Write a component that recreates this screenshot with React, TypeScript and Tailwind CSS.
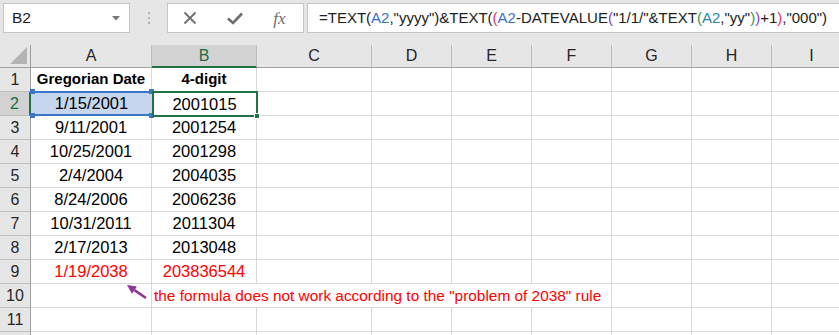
const COLS = [
  { key: "A", w: "w-[121px]" },
  { key: "B", w: "w-[105px]" },
  { key: "C", w: "w-[115px]" },
  { key: "D", w: "w-[80px]" },
  { key: "E", w: "w-[80px]" },
  { key: "F", w: "w-[80px]" },
  { key: "G", w: "w-[80px]" },
  { key: "H", w: "w-[80px]" },
  { key: "I", w: "w-[80px]" },
];

const DATA = [
  ["1/15/2001", "2001015"],
  ["9/11/2001", "2001254"],
  ["10/25/2001", "2001298"],
  ["2/4/2004", "2004035"],
  ["8/24/2006", "2006236"],
  ["10/31/2011", "2011304"],
  ["2/17/2013", "2013048"],
];

const RowHeader = ({ n, active }: { n?: number; active?: boolean }) => (
  <div
    className={
      active
        ? "w-[31px] shrink-0 h-full flex items-center justify-center text-[16px] bg-[#d2d2d2] text-[#1e6b41] border-r-2 border-r-[#217346] border-b border-b-[#bdbdbd]"
        : "w-[31px] shrink-0 h-full flex items-center justify-center text-[16px] bg-[#e6e6e6] text-[#262626] border-r border-r-[#9e9e9e] border-b border-b-[#bdbdbd]"
    }
  >
    {n}
  </div>
);

const Cell = ({ w, children, className = "" }: { w: string; children?: React.ReactNode; className?: string }) => (
  <div className={`${w} shrink-0 h-full flex items-center justify-center border-r border-b border-[#d9d9d9] bg-white ${className}`}>
    {children}
  </div>
);

const FormulaBar = () => (
  <div className="h-[45px] bg-[#e6e6e6] flex items-start pt-[3px] pl-[3px]">
    {/* name box */}
    <div className="w-[127px] h-[30px] bg-white border border-[#c6c6c6] flex items-center justify-between pl-[8px] pr-[9px] text-[15.5px] text-[#222]">
      <span>B2</span>
      <svg width="8" height="5" viewBox="0 0 8 5">
        <path d="M0 0 L8 0 L4 4.5 Z" fill="#777" />
      </svg>
    </div>
    <div className="w-[37px] h-[30px] flex flex-col items-center justify-center gap-[3px]">
      <div className="w-[2px] h-[2px] bg-[#b3b3b3]" />
      <div className="w-[2px] h-[2px] bg-[#b3b3b3]" />
      <div className="w-[2px] h-[2px] bg-[#b3b3b3]" />
    </div>
    {/* buttons */}
    <div className="w-[137px] h-[30px] bg-white border border-[#c6c6c6] flex items-center">
      <div className="w-[46px] flex justify-center">
        <svg width="14" height="14" viewBox="0 0 14 14">
          <path d="M1.5 1.5 L12.5 12.5 M12.5 1.5 L1.5 12.5" stroke="#6e6e6e" strokeWidth="1.8" />
        </svg>
      </div>
      <div className="w-[46px] flex justify-center">
        <svg width="16" height="13" viewBox="0 0 16 13">
          <path d="M1 6.5 L6 11 L15 1.5" stroke="#6e6e6e" strokeWidth="2.6" fill="none" />
        </svg>
      </div>
      <div className="w-[46px] flex justify-center pr-[2px] text-[17px] italic text-[#6e6e6e] font-['Liberation_Serif',serif] leading-none">
        fx
      </div>
    </div>
    {/* formula */}
    <div className="ml-[3px] flex-1 h-[30px] bg-white border border-r-0 border-[#c6c6c6] flex items-center pl-[11px] text-[15px] text-[#222] whitespace-nowrap overflow-hidden">
      <span>=TEXT(</span>
      <span className="text-[#3b6fc9]">A2</span>
      <span>,"yyyy")&amp;TEXT(</span>
      <span className="text-[#e0306a]">(</span>
      <span className="text-[#3b6fc9]">A2</span>
      <span>-DATEVALUE</span>
      <span className="text-[#8a3fc4]">(</span>
      <span>"1/1/"&amp;TEXT</span>
      <span className="text-[#2a9a56]">(</span>
      <span className="text-[#2f86a8]">A2</span>
      <span>,"yy"</span>
      <span className="text-[#2a9a56]">)</span>
      <span className="text-[#8a3fc4]">)</span>
      <span>+1</span>
      <span className="text-[#e0306a]">)</span>
      <span>,"000")</span>
    </div>
  </div>
);

const ColumnHeaders = () => (
  <div className="h-[23px] flex bg-[#e6e6e6] text-[16px]">
    <div className="w-[31px] shrink-0 h-full border-r border-b border-[#9e9e9e] flex items-end justify-end pr-[3px] pb-[3px]">
      <svg width="17" height="17" viewBox="0 0 17 17">
        <path d="M17 0 L17 17 L0 17 Z" fill="#b4b4b4" />
      </svg>
    </div>
    {COLS.map((c) =>
      c.key === "B" ? (
        <div
          key={c.key}
          className={`${c.w} shrink-0 h-full flex items-center justify-center bg-[#d2d2d2] text-[#1e6b41] border-r border-r-[#bdbdbd] border-b-2 border-b-[#217346]`}
        >
          {c.key}
        </div>
      ) : (
        <div
          key={c.key}
          className={`${c.w} shrink-0 h-full flex items-center justify-center text-[#262626] border-r border-r-[#bdbdbd] border-b border-b-[#9e9e9e]`}
        >
          {c.key}
        </div>
      )
    )}
  </div>
);

const Corner = ({ className }: { className: string }) => (
  <div className={`absolute w-[5px] h-[5px] ${className}`} />
);

export default function App() {
  return (
    <div className="relative w-[839px] h-[335px] overflow-hidden bg-white font-['Liberation_Sans',Arial,sans-serif]">
      <FormulaBar />
      <ColumnHeaders />

      {/* row 1 */}
      <div className="h-[24px] flex text-[15px]">
        <RowHeader n={1} />
        <Cell w={COLS[0].w} className="font-bold">Gregorian Date</Cell>
        <Cell w={COLS[1].w} className="font-bold">4-digit</Cell>
        {COLS.slice(2).map((c) => (
          <Cell key={c.key} w={c.w} />
        ))}
      </div>

      {DATA.map((r, i) => (
        <div key={i} className="h-[24px] flex text-[16.5px] text-black">
          <RowHeader n={i + 2} active={i === 0} />
          {i === 0 ? (
            <>
              <div className={`${COLS[0].w} shrink-0 h-full relative flex items-center justify-center bg-[#c5d6ee] border-b border-[#d9d9d9]`}>
                <div className="absolute left-0 right-0 top-[-1px] h-[2px] bg-[#3a76c9]" />
                <div className="absolute left-0 right-0 bottom-[-1px] h-[2px] bg-[#3a76c9]" />
                <Corner className="left-[-1px] top-[-3px] bg-[#3a76c9]" />
                <Corner className="left-[-1px] bottom-[-3px] bg-[#3a76c9]" />
                <Corner className="right-[-2px] top-[-3px] bg-[#3a76c9]" />
                <Corner className="right-[-2px] bottom-[-3px] bg-[#3a76c9]" />
                {r[0]}
              </div>
              <div className={`${COLS[1].w} shrink-0 h-full relative flex items-center justify-center bg-white`}>
                <div className="absolute left-0 right-[-1px] top-[-1px] bottom-[-1px] border-2 border-[#217346]" />
                <div className="absolute right-[-3px] bottom-[-3px] w-[6px] h-[6px] bg-[#217346] border border-white" />
                {r[1]}
              </div>
            </>
          ) : (
            <>
              <Cell w={COLS[0].w}>{r[0]}</Cell>
              <Cell w={COLS[1].w}>{r[1]}</Cell>
            </>
          )}
          {COLS.slice(2).map((c) => (
            <Cell key={c.key} w={c.w} />
          ))}
        </div>
      ))}

      {/* row 9 */}
      <div className="h-[24px] flex text-[16.5px] text-[#ff0000]">
        <RowHeader n={9} />
        <Cell w={COLS[0].w}>1/19/2038</Cell>
        <Cell w={COLS[1].w}>203836544</Cell>
        {COLS.slice(2).map((c) => (
          <Cell key={c.key} w={c.w} />
        ))}
      </div>

      {/* row 10 with note */}
      <div className="h-[24px] flex text-[15.4px]">
        <RowHeader n={10} />
        <Cell w={COLS[0].w} />
        <div className="w-[460px] shrink-0 h-full flex items-center pl-[2px] border-r border-b border-[#d9d9d9] text-[#ff0000] whitespace-nowrap">
          the formula does not work according to the "problem of 2038" rule
        </div>
        {COLS.slice(6).map((c) => (
          <Cell key={c.key} w={c.w} />
        ))}
      </div>

      <div className="h-[24px] flex">
        <RowHeader n={11} />
        {COLS.map((c) => (
          <Cell key={c.key} w={c.w} />
        ))}
      </div>
      <div className="h-[24px] flex">
        <RowHeader />
        {COLS.map((c) => (
          <Cell key={c.key} w={c.w} />
        ))}
      </div>

      {/* arrow pointing at the 2038 date */}
      <svg className="absolute left-[120px] top-[278px]" width="32" height="26" viewBox="0 0 32 26">
        <path d="M26 20 L14.4 12.1" stroke="#8e3599" strokeWidth="2.6" />
        <path d="M7 7 L16.9 8.4 L11.9 15.8 Z" fill="#8e3599" />
      </svg>
    </div>
  );
}
